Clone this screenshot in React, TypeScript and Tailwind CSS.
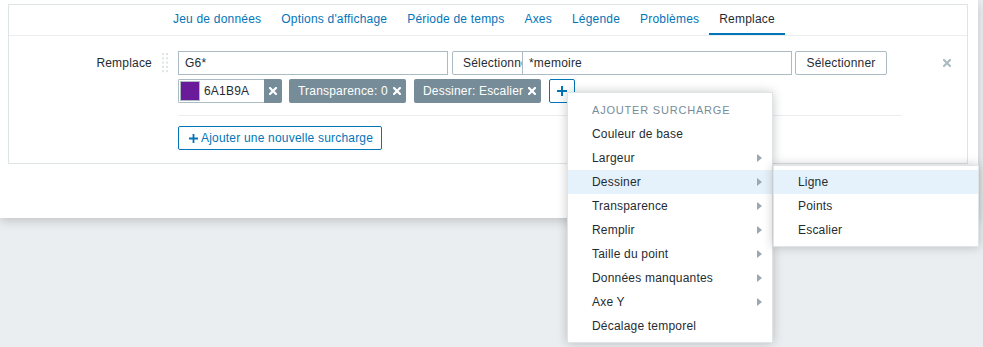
import React from "react";

const tabs = [
  "Jeu de données",
  "Options d'affichage",
  "Période de temps",
  "Axes",
  "Légende",
  "Problèmes",
  "Remplace",
];

const menuItems: { label: string; sub?: boolean; active?: boolean }[] = [
  { label: "Couleur de base" },
  { label: "Largeur", sub: true },
  { label: "Dessiner", sub: true, active: true },
  { label: "Transparence", sub: true },
  { label: "Remplir", sub: true },
  { label: "Taille du point", sub: true },
  { label: "Données manquantes", sub: true },
  { label: "Axe Y", sub: true },
  { label: "Décalage temporel" },
];

function CloseIcon({ color = "#ffffff", size = 8 }: { color?: string; size?: number }) {
  return (
    <svg width={size} height={size} viewBox="0 0 8 8">
      <path d="M1 1 L7 7 M7 1 L1 7" stroke={color} strokeWidth="2.2" strokeLinecap="square" />
    </svg>
  );
}

function Arrow() {
  return (
    <svg width="5" height="8" viewBox="0 0 5 8">
      <path d="M0 0 L5 4 L0 8 Z" fill="#9aa8b0" />
    </svg>
  );
}

function DragHandle() {
  return (
    <svg width="6" height="20" viewBox="0 0 6 20">
      {[0, 1, 2, 3, 4].map((r) => (
        <g key={r}>
          <rect x="0" y={r * 4.3} width="2" height="2" fill="#dfe4e7" />
          <rect x="4" y={r * 4.3} width="2" height="2" fill="#dfe4e7" />
        </g>
      ))}
    </svg>
  );
}

function Tag({ text }: { text: string }) {
  return (
    <div className="flex h-[24px] items-center gap-[5px] rounded-[2px] bg-[#768d99] pl-[9px] pr-[5px] text-white">
      <span>{text}</span>
      <CloseIcon />
    </div>
  );
}

export default function App() {
  return (
    <div
      className="relative h-[347px] w-[983px] overflow-hidden bg-[#ebeef0] text-[12px] tracking-[0.2px] text-[#1f2c33]"
      style={{ fontFamily: '"Liberation Sans", Arial, sans-serif' }}
    >
      <div className="h-[218px] w-[978px] bg-white pl-[8px] pt-[4px] shadow-[0_3px_10px_rgba(0,0,0,0.18)]">
        <div className="h-[160px] w-[960px] border border-[#dfe4e7]">
          {/* tabs */}
          <div className="flex h-[31px] border-b border-[#ebeef0] pl-[154px]">
            {tabs.map((t) => (
              <div
                key={t}
                className={
                  t === "Remplace"
                    ? "flex h-[30px] items-center border-b-2 border-[#0275b8] px-[10px] text-[#1f2c33]"
                    : "flex h-[30px] items-center border-b-2 border-transparent px-[10px] text-[#0275b8]"
                }
              >
                {t}
              </div>
            ))}
          </div>

          {/* form */}
          <div className="flex pt-[15px]">
            <div className="flex h-[24px] w-[143px] items-center justify-end">Remplace</div>
            <div className="ml-[10px] pt-[2px]">
              <DragHandle />
            </div>
            <div className="ml-[10px] flex flex-col">
              <div className="flex h-[24px] items-center">
                <div className="flex h-[24px] w-[270px] items-center border border-[#acbbc2] px-[6px]">G6*</div>
                <div className="ml-[4px] h-[24px] w-[70px] overflow-hidden">
                  <div className="flex h-[24px] w-[92px] items-center rounded-[2px] border border-[#acbbc2] pl-[10px]">
                    Sélectionner
                  </div>
                </div>
                <div className="flex h-[24px] w-[270px] items-center border border-[#acbbc2] px-[6px]">*memoire</div>
                <div className="ml-[3px] flex h-[24px] w-[92px] items-center justify-center rounded-[2px] border border-[#acbbc2]">
                  Sélectionner
                </div>
                <div className="ml-[56px]">
                  <CloseIcon color="#acbbc2" />
                </div>
              </div>

              <div className="mt-[4px] flex h-[24px] items-center gap-[8px]">
                <div className="mr-[-1px] flex h-[24px] w-[104px] overflow-hidden rounded-[2px]">
                  <div className="flex h-[24px] w-[86px] items-center border border-r-0 border-[#acbbc2] pl-[1px]">
                    <div className="h-[20px] w-[20px] border border-[#acbbc2] bg-[#6a1b9a]" />
                    <span className="ml-[4px]">6A1B9A</span>
                  </div>
                  <div className="flex h-[24px] w-[18px] items-center justify-center bg-[#768d99]">
                    <CloseIcon />
                  </div>
                </div>
                <Tag text="Transparence: 0" />
                <Tag text="Dessiner: Escalier" />
                <div className="flex h-[24px] w-[26px] items-center justify-center rounded-[2px] border border-[#0275b8] text-[#0275b8]">
                  <svg width="10" height="10" viewBox="0 0 10 10">
                    <path d="M5 0 V10 M0 5 H10" stroke="#0275b8" strokeWidth="2" />
                  </svg>
                </div>
              </div>

              <div className="mt-[12px] h-px w-[724px] bg-[#ebeef0]" />

              <div className="mt-[10px] flex h-[24px] w-[204px] items-center rounded-[2px] border border-[#0275b8] pl-[10px] text-[#0275b8]">
                <svg width="9" height="9" viewBox="0 0 10 10">
                  <path d="M5 0 V10 M0 5 H10" stroke="#0275b8" strokeWidth="2" />
                </svg>
                <span className="ml-[3px]">Ajouter une nouvelle surcharge</span>
              </div>
            </div>
          </div>
        </div>
      </div>

      {/* dropdown menu */}
      <div className="absolute left-[567px] top-[92px] w-[206px] border border-[#dfe4e7] bg-white pb-[4px] pt-[5px] shadow-[0_0_10px_rgba(0,0,0,0.22)]">
        <div className="flex h-[24px] items-center pl-[24px] text-[11px] uppercase tracking-[0.8px] text-[#768d99]">
          Ajouter surcharge
        </div>
        {menuItems.map((m) => (
          <div
            key={m.label}
            className={
              m.active
                ? "flex h-[24px] items-center justify-between bg-[#e6f2fb] pl-[24px] pr-[10px]"
                : "flex h-[24px] items-center justify-between pl-[24px] pr-[10px]"
            }
          >
            <span>{m.label}</span>
            {m.sub && <Arrow />}
          </div>
        ))}
      </div>

      {/* submenu */}
      <div className="absolute left-[773px] top-[165px] w-[206px] border border-[#dfe4e7] bg-white py-[4px] shadow-[0_0_10px_rgba(0,0,0,0.22)]">
        <div className="flex h-[24px] items-center bg-[#e6f2fb] pl-[24px]">Ligne</div>
        <div className="flex h-[24px] items-center pl-[24px]">Points</div>
        <div className="flex h-[24px] items-center pl-[24px]">Escalier</div>
      </div>
    </div>
  );
}
